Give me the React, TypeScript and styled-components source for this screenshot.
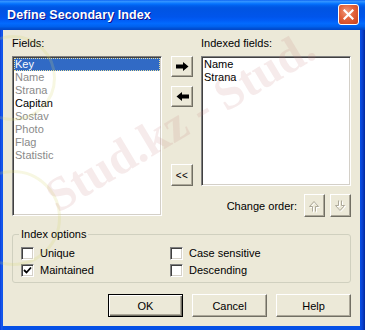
import React from "react";
import styled, { createGlobalStyle } from "styled-components";

/* global */
const GlobalStyle = createGlobalStyle`
  html, body {
    margin: 0;
    padding: 0;
    background: #ffffff;
  }
  body {
    font-family: "Liberation Sans", Arial, sans-serif;
    font-size: 11px;
    color: #000;
  }
`;

/* data */
const fields = [
  { name: "Key", color: "#ffffff", selected: true },
  { name: "Name", color: "#8a8a8a" },
  { name: "Strana", color: "#8a8a8a" },
  { name: "Capitan", color: "#000000" },
  { name: "Sostav", color: "#8a8a8a" },
  { name: "Photo", color: "#8a8a8a" },
  { name: "Flag", color: "#8a8a8a" },
  { name: "Statistic", color: "#8a8a8a" },
];

const indexed = ["Name", "Strana"];

const options = [
  { label: "Unique", checked: false },
  { label: "Case sensitive", checked: false },
  { label: "Maintained", checked: true },
  { label: "Descending", checked: false },
];

/* icons */
const RightArrow = () => (
  <svg width="13" height="9" viewBox="0 0 13 9">
    <polygon points="0,2.5 7,2.5 7,0 12.5,4.5 7,9 7,6.5 0,6.5" fill="#000" />
  </svg>
);

const LeftArrow = () => (
  <svg width="13" height="9" viewBox="0 0 13 9">
    <polygon points="13,2.5 6,2.5 6,0 0.5,4.5 6,9 6,6.5 13,6.5" fill="#000" />
  </svg>
);

const UpOutline = () => (
  <svg width="13" height="14" viewBox="0 0 13 14">
    <path d="M5.5 13.5 V8.5 H2.5 L7 3.5 L11.5 8.5 H8.5 V13.5" fill="none" stroke="#ffffff" strokeWidth="1" />
    <path d="M4.5 12.5 V7.5 H1.5 L6 2.5 L10.5 7.5 H7.5 V12.5" fill="none" stroke="#aca899" strokeWidth="1" />
  </svg>
);

const DownOutline = () => (
  <svg width="13" height="14" viewBox="0 0 13 14">
    <path d="M5.5 2.5 V7.5 H2.5 L7 12.5 L11.5 7.5 H8.5 V2.5" fill="none" stroke="#ffffff" strokeWidth="1" />
    <path d="M4.5 1.5 V6.5 H1.5 L6 11.5 L10.5 6.5 H7.5 V1.5" fill="none" stroke="#aca899" strokeWidth="1" />
  </svg>
);

const CheckMark = () => (
  <svg width="9" height="9" viewBox="0 0 9 9">
    <polyline points="1,4 3.5,6.5 8,1.5" fill="none" stroke="#000" strokeWidth="1.8" />
  </svg>
);

const CloseX = () => (
  <svg width="11" height="11" viewBox="0 0 11 11">
    <path d="M1.5 1.5 L9.5 9.5 M9.5 1.5 L1.5 9.5" stroke="#fff" strokeWidth="2.2" strokeLinecap="square" />
  </svg>
);

/* styled */
const Window = styled.div`
  position: relative;
  width: 365px;
  height: 330px;
  display: flex;
  flex-direction: column;
  background: linear-gradient(to right, #0a3fd8 0px, #1a5cf0 2px, #0550e6 3px, #0550e6 360px, #0b44d6 362px, #032a9c 365px);
  overflow: hidden;
`;

const TitleBar = styled.div`
  height: 30px;
  flex: none;
  display: flex;
  align-items: center;
  justify-content: space-between;
  padding: 0 6px 0 7px;
  box-sizing: border-box;
  background: linear-gradient(180deg, #0a5ff0 0%, #3593ff 4%, #288eff 7%, #127dff 10%, #036ffc 14%, #0262ee 18%, #0057e5 24%, #0054e3 30%, #0055eb 56%, #005bf5 66%, #026afe 78%, #0062ef 88%, #0052d6 94%, #0046c8 100%);
`;

const Title = styled.span`
  font-family: "Liberation Sans", Arial, sans-serif;
  font-weight: bold;
  font-size: 12.5px;
  color: #ffffff;
  text-shadow: 1px 1px 0 #0f1089;
  letter-spacing: 0.1px;
`;

const CloseButton = styled.div`
  width: 21px;
  height: 21px;
  box-sizing: border-box;
  border: 1px solid #ffffff;
  border-radius: 3px;
  display: flex;
  align-items: center;
  justify-content: center;
  background: radial-gradient(circle at 40% 35%, #f09a7c 0%, #e2613a 45%, #c8401c 100%);
  margin-top: -1px;
`;

const Body = styled.div`
  flex: 1;
  margin: 0 5px 4px 3px;
  background: #ece9d8;
  padding: 7px 9px 9px 9px;
  display: flex;
  flex-direction: column;
  box-sizing: border-box;
`;

const TopGrid = styled.div`
  display: grid;
  grid-template-columns: 150px 1fr 150px;
`;

const Column = styled.div`
  display: flex;
  flex-direction: column;
`;

const Label = styled.div`
  height: 13px;
  line-height: 13px;
  margin-bottom: 6px;
  white-space: nowrap;
`;

const ListBox = styled.div<{ $height: number }>`
  height: ${(p) => p.$height}px;
  box-sizing: border-box;
  background: #ffffff;
  border: 1px solid;
  border-color: #808080 #ffffff #ffffff #808080;
  box-shadow: inset 1px 1px 0 #404040, inset -1px -1px 0 #d4d0c8;
  padding: 1px;
  overflow: hidden;
`;

const ListItem = styled.div<{ $color: string; $selected?: boolean }>`
  height: 13px;
  line-height: 13px;
  padding-left: 1px;
  color: ${(p) => p.$color};
  background: ${(p) => (p.$selected ? "#316ac5" : "transparent")};
  outline: ${(p) => (p.$selected ? "1px dotted #e8e0a0" : "none")};
  outline-offset: -1px;
  white-space: nowrap;
`;

const MoveColumn = styled.div`
  display: flex;
  flex-direction: column;
  align-items: flex-start;
  padding: 19px 0 0 9px;
  gap: 9px;
`;

const ToolButton = styled.div<{ $w: number; $h: number; $gapTop?: number }>`
  width: ${(p) => p.$w}px;
  height: ${(p) => p.$h}px;
  margin-top: ${(p) => p.$gapTop || 0}px;
  box-sizing: border-box;
  background: #ece9d8;
  border: 1px solid;
  border-color: #ffffff #716f64 #716f64 #ffffff;
  box-shadow: inset -1px -1px 0 #aca899;
  display: flex;
  align-items: center;
  justify-content: center;
  font-size: 10px;
  letter-spacing: 0.5px;
  color: #000;
`;

const OrderRow = styled.div`
  margin-top: 8px;
  height: 23px;
  display: flex;
  align-items: center;
  justify-content: flex-end;
  gap: 5px;
`;

const OrderLabel = styled.span`
  margin-right: 2px;
  white-space: nowrap;
`;

const GroupBox = styled.fieldset`
  margin: 11px 0 0 0;
  padding: 6px 8px 5px 8px;
  border: 1px solid #d0d0bf;
  border-radius: 3px;
  min-width: 0;
`;

const Legend = styled.legend`
  padding: 0 2px;
  margin-left: -2px;
  line-height: 13px;
  color: #000;
`;

const OptionsGrid = styled.div`
  display: grid;
  grid-template-columns: 149px 1fr;
  grid-auto-rows: 13px;
  row-gap: 4px;
`;

const CheckRow = styled.label`
  display: flex;
  align-items: center;
  gap: 6px;
  line-height: 13px;
  white-space: nowrap;
`;

const Box = styled.span`
  width: 13px;
  height: 13px;
  box-sizing: border-box;
  background: #ffffff;
  border: 1px solid;
  border-color: #808080 #ffffff #ffffff #808080;
  box-shadow: inset 1px 1px 0 #404040, inset -1px -1px 0 #d4d0c8;
  display: flex;
  align-items: center;
  justify-content: center;
`;

const ButtonRow = styled.div`
  margin-top: 11px;
  display: flex;
  justify-content: flex-end;
  gap: 9px;
`;

const PushButton = styled.div<{ $default?: boolean }>`
  width: 75px;
  height: 23px;
  box-sizing: border-box;
  background: #ece9d8;
  display: flex;
  align-items: center;
  justify-content: center;
  border: 1px solid;
  border-color: ${(p) => (p.$default ? "#000 #000 #000 #000" : "#ffffff #716f64 #716f64 #ffffff")};
  box-shadow: ${(p) =>
    p.$default
      ? "inset 1px 1px 0 #ffffff, inset -1px -1px 0 #716f64, inset -2px -2px 0 #aca899"
      : "inset -1px -1px 0 #aca899"};
`;

const Watermark = styled.div`
  position: absolute;
  inset: 0;
  pointer-events: none;
  overflow: hidden;
`;

const MarkText = styled.span<{ $x: number; $y: number }>`
  position: absolute;
  left: ${(p) => p.$x}px;
  top: ${(p) => p.$y}px;
  font-family: "Liberation Serif", "Times New Roman", serif;
  font-weight: bold;
  font-size: 48px;
  line-height: 48px;
  white-space: nowrap;
  color: rgba(195, 120, 120, 0.15);
  transform: rotate(-31deg);
  transform-origin: left bottom;
`;

const MarkRing = styled.span<{ $x: number; $y: number; $size: number }>`
  position: absolute;
  left: ${(p) => p.$x}px;
  top: ${(p) => p.$y}px;
  width: ${(p) => p.$size}px;
  height: ${(p) => p.$size}px;
  border-radius: 50%;
  border: 3px solid rgba(215, 215, 110, 0.2);
`;

/* DOM */
const App: React.FC = (): JSX.Element => {
  return (
    <>
      <GlobalStyle />
      <Window>
        <TitleBar>
          <Title>Define Secondary Index</Title>
          <CloseButton><CloseX /></CloseButton>
        </TitleBar>
        <Body>
          <TopGrid>
            <Column>
              <Label>Fields:</Label>
              <ListBox $height={160}>
                {fields.map((f) => (
                  <ListItem key={f.name} $color={f.color} $selected={f.selected}>{f.name}</ListItem>
                ))}
              </ListBox>
            </Column>
            <MoveColumn>
              <ToolButton $w={22} $h={21}><RightArrow /></ToolButton>
              <ToolButton $w={22} $h={21}><LeftArrow /></ToolButton>
              <ToolButton $w={22} $h={22} $gapTop={48}>&lt;&lt;</ToolButton>
            </MoveColumn>
            <Column>
              <Label>Indexed fields:</Label>
              <ListBox $height={130}>
                {indexed.map((n) => (
                  <ListItem key={n} $color="#000">{n}</ListItem>
                ))}
              </ListBox>
              <OrderRow>
                <OrderLabel>Change order:</OrderLabel>
                <ToolButton $w={21} $h={23}><UpOutline /></ToolButton>
                <ToolButton $w={21} $h={23}><DownOutline /></ToolButton>
              </OrderRow>
            </Column>
          </TopGrid>
          <GroupBox>
            <Legend>Index options</Legend>
            <OptionsGrid>
              {options.map((o) => (
                <CheckRow key={o.label}>
                  <Box>{o.checked && <CheckMark />}</Box>
                  {o.label}
                </CheckRow>
              ))}
            </OptionsGrid>
          </GroupBox>
          <ButtonRow>
            <PushButton $default>OK</PushButton>
            <PushButton>Cancel</PushButton>
            <PushButton>Help</PushButton>
          </ButtonRow>
        </Body>
        <Watermark>
          <MarkRing $x={-30} $y={35} $size={80} />
          <MarkRing $x={-35} $y={170} $size={90} />
          <MarkText $x={62} $y={172}>Stud.kz - Stud.</MarkText>
        </Watermark>
      </Window>
    </>
  );
};

export default App;
